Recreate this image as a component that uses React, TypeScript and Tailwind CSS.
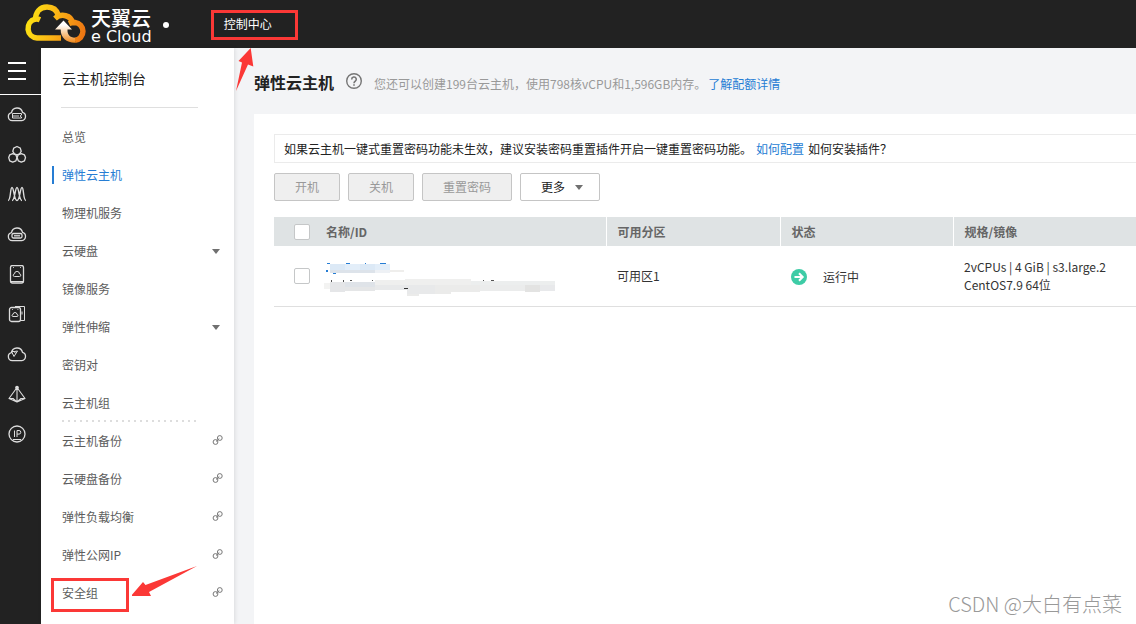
import { ReactNode } from "react";

type NavItem = {
  label: string;
  active?: boolean;
  expandable?: boolean;
  external?: boolean;
  dotted?: boolean;
  marked?: boolean;
};

const navItems: NavItem[] = [
  { label: "总览" },
  { label: "弹性云主机", active: true },
  { label: "物理机服务" },
  { label: "云硬盘", expandable: true },
  { label: "镜像服务" },
  { label: "弹性伸缩", expandable: true },
  { label: "密钥对" },
  { label: "云主机组", dotted: true },
  { label: "云主机备份", external: true },
  { label: "云硬盘备份", external: true },
  { label: "弹性负载均衡", external: true },
  { label: "弹性公网IP", external: true },
  { label: "安全组", external: true, marked: true },
];

const cloud =
  "M5.2 15.6a4 4 0 0 1-.7-7.9 5.6 5.6 0 0 1 11-.3 4.2 4.2 0 0 1-.7 8.2z";

const railIcons: { name: string; art: ReactNode }[] = [
  {
    name: "弹性云主机",
    art: (
      <>
        <path d={cloud} />
        <path d="M5.500 8.500h9v1.500l-1.500 1 1.500 1v1h-9zM6 11h6" strokeWidth="1" />
      </>
    ),
  },
  {
    name: "容器",
    art: (
      <>
        <path d="M10 1.500l3.300 1.600.9 3.200-1.600 2.600-2.600.9-2.600-.9-1.600-2.600.9-3.200z" />
        <path d="M5.700 8.700l3.200 1.200 1 2.700-1 3.200-3.200 1.400-3-1.400-1-3.200 1-2.700z" />
        <path d="M14.300 8.700l3.200 1.200 1 2.700-1 3.200-3.200 1.400-3-1.400-1.200-3.200 1-2.700z" />
      </>
    ),
  },
  {
    name: "弹性伸缩",
    art: (
      <path
        d="M1 15.500C4 15.500 3 2.500 5 2.500S7 15.500 10 15.500M5 15.500C8 15.500 8 2.500 10 2.500S12 15.500 15 15.500M10 15.500C13 15.500 13 2.500 15 2.500S16 15.500 19 15.500"
        strokeWidth="1.400"
      />
    ),
  },
  {
    name: "云硬盘",
    art: (
      <>
        <path d={cloud} />
        <rect x="5" y="8.500" width="10" height="4.500" rx="1.500" />
        <path d="M7 10.800h6" />
      </>
    ),
  },
  {
    name: "物理机",
    art: (
      <>
        <rect x="3.500" y="0.500" width="13" height="17.500" rx="2" />
        <path
          d="M7.500 11.500a1.300 1.300 0 0 1 0-2.600 2.500 2.500 0 0 1 5 0 1.300 1.300 0 0 1 0 2.600zM4 16.500h12M6 2.500h.8M13.200 2.500h.8"
          strokeWidth="1"
        />
      </>
    ),
  },
  {
    name: "镜像",
    art: (
      <>
        <rect x="2.500" y="2.500" width="11" height="14" rx="2" />
        <path
          d="M8 1.500h9.500v14H14M15 6.500v3M6 11.500a1 1 0 0 1 0-2 2 2 0 0 1 4 0 1 1 0 0 1 0 2zM5 4.500h.8M10.500 4.500h.8"
          strokeWidth="1"
        />
      </>
    ),
  },
  {
    name: "备份",
    art: (
      <>
        <path d={cloud} />
        <path d="M4.500 6.500h3l3 -.5-3.500 5.500zM7 6l1.500 2.500" strokeWidth="1" />
      </>
    ),
  },
  {
    name: "负载均衡",
    art: (
      <>
        <path d="M10 2.500L2 13.500l8 3.500 8-3.500zM10 3v14M2 13.500h4l4 3.500 4-3.500h4" strokeWidth="1.100" />
        <circle cx="10" cy="2.500" r="1.200" fill="currentColor" />
      </>
    ),
  },
  {
    name: "弹性IP",
    art: (
      <>
        <circle cx="10" cy="9" r="8" />
        <path d="M7.500 5.500v6.500M10 12V5.500h2a1.800 1.800 0 0 1 0 3.600h-2M6 14.500h8" strokeWidth="1" />
      </>
    ),
  },
];

const Logo = () => (
  <a href="#" aria-label="天翼云" className="flex items-center text-white">
    <svg width="64" height="42" viewBox="0 0 64 42" fill="none">
      <defs>
        <linearGradient id="sun" gradientUnits="userSpaceOnUse" x1="2" y1="10" x2="62" y2="26">
          <stop offset="0" stopColor="#fbe713" />
          <stop offset="0.5" stopColor="#fbb315" />
          <stop offset="1" stopColor="#ee7412" />
        </linearGradient>
        <linearGradient id="lift" x1="0" y1="0" x2="0" y2="1">
          <stop offset="0.2" stopColor="#fff" />
          <stop offset="1" stopColor="#f08a1c" />
        </linearGradient>
      </defs>
      <path
        d="M37 35H13A9.600 9.600 0 0 1 11 16.200c1.500-.3 3.500-.2 5 .5M11.500 17C11.500 9 16 4 23 4c6 0 10 3.500 11.500 8.500M31 15.500C37 10 47.500 12 48.500 20.200M45 20.500c1.500-.7 3.500-1 6-1A8.900 8.900 0 0 1 51 37.200"
        stroke="url(#sun)"
        strokeWidth="5.500"
      />
      <path
        d="M39.500 17.500l8.500 9h-4.500c-.3 5 2.500 8.200 7.500 8.200v5c-8.500 0-14.500-5-14.300-13.200H31z"
        fill="url(#lift)"
      />
    </svg>
    <span className="flex flex-col pt-1.5 pl-[3px]">
      <span className="font-['Liberation_Sans','Noto_Sans_CJK_SC',sans-serif] text-[20px] leading-5 font-medium">
        天翼云
      </span>
      <span className="font-['DejaVu_Sans',sans-serif] text-base leading-4">
        e Cloud
      </span>
    </span>
  </a>
);

const Caret = () => (
  <svg width="8" height="5" viewBox="0 0 8 5" fill="#707070">
    <path d="M0 0h8L4 5z" />
  </svg>
);

const LinkIcon = () => (
  <svg width="11" height="14" viewBox="0 0 11 14" fill="none" stroke="#777">
    <circle cx="3.500" cy="8" r="2.400" />
    <circle cx="7.800" cy="4" r="2.400" />
    <path d="M4 7.500l3.300-3" />
  </svg>
);

const Header = () => (
  <header className="flex h-12 items-center bg-[#222] pl-6">
    <Logo />
    <span className="mt-0.5 ml-[11px] size-1.5 rounded-full bg-white" />
    <a
      href="#"
      className="mt-0.5 ml-[42px] flex h-[30px] w-[87px] items-center border-3 border-[#fb3836] pb-0.5 pl-2.5 text-xs text-white"
    >
      控制中心
    </a>
  </header>
);

const Rail = () => (
  <div className="w-[41px] shrink-0 bg-[#222] text-[#ddd]">
    <button
      aria-label="菜单"
      className="flex h-[47px] w-full flex-col justify-center gap-1.5 border-b border-white pl-2"
    >
      <span className="h-0.5 w-[18px] bg-white" />
      <span className="h-0.5 w-[18px] bg-white" />
      <span className="h-0.5 w-[18px] bg-white" />
    </button>
    {railIcons.map((icon) => (
      <a
        key={icon.name}
        href="#"
        aria-label={icon.name}
        className="flex h-10 items-center pl-[7px]"
      >
        <svg
          width="20"
          height="20"
          viewBox="0 0 20 20"
          fill="none"
          stroke="currentColor"
          strokeWidth="1.300"
          strokeLinejoin="round"
        >
          {icon.art}
        </svg>
      </a>
    ))}
  </div>
);

const Sidebar = () => (
  <nav className="z-10 w-[193px] shrink-0 bg-white shadow-[1px_0_4px_rgba(0,0,0,0.1)]">
    <div className="mr-9 ml-5 flex h-[60px] items-center border-b border-[#dfdfdf] pl-px text-sm">
      <h2>云主机控制台</h2>
    </div>
    <ul className="pt-2.5 pl-[11px] text-xs text-[#5c5c5c]">
      {navItems.map((item) => (
        <li key={item.label} className="relative flex h-[38px] items-center pr-[11px]">
          <a
            href="#"
            className={
              item.active
                ? "flex h-[18px] flex-1 items-center border-l-2 border-[#267dd4] pl-2 text-[#267dd4]"
                : "flex h-[18px] flex-1 items-center border-l-2 border-transparent pl-2"
            }
          >
            {item.label}
          </a>
          {item.expandable && (
            <span className="pr-[3px]">
              <Caret />
            </span>
          )}
          {item.external && <LinkIcon />}
          {item.dotted && (
            <span className="absolute bottom-0 left-2.5 h-0.5 w-[136px] bg-[repeating-linear-gradient(90deg,#ddd_0_2px,transparent_2px_6px)]" />
          )}
          {item.marked && (
            <>
              <span className="absolute top-1 -left-px h-[34px] w-[78px] border-3 border-[#fb3836]" />
              <svg
                className="absolute -top-2 left-20"
                width="66"
                height="32"
                viewBox="0 0 66 32"
                fill="#fb3836"
              >
                <path d="M-1 30L11 16l2.500 3L65 0 17 26l2 4z" />
              </svg>
            </>
          )}
        </li>
      ))}
    </ul>
  </nav>
);

// Pixelated cover over the instance name and id
const MaskedName = () => (
  <svg width="232" height="36" viewBox="0 0 232 36" role="img" aria-label="已隐藏" shapeRendering="crispEdges">
    <path fill="#267dd4" d="M3 1h3v1H3zM22 1h4v1h-4zM41 1h1v1h-1zM56 1h6v1h-6zM2 8h2v2H2zM9 11h3v1H9zM10 10h2v1h-2z" />
    <path fill="#dce9f6" d="M6 2h15v6H6zM36 2h15v6H36z" />
    <path fill="#e3eef9" d="M21 2h15v6H21zM51 2h15v6H51z" />
    <path fill="#dde3ea" d="M6 8h45v3H6z" />
    <path fill="#eef1f5" d="M51 8h15v3H51z" />
    <path fill="#efeeec" d="M66 8h14v2H66z" />
    <path fill="#555" d="M7 18h1v2H7zM19 18h1v2h-1zM26 18h2v1h-2zM48 18h1v1h-1zM159 18h1v1h-1zM167 18h3v1h-3zM225 19h2v1h-2z" />
    <path fill="#f3f3f2" d="M0 21h6v6H0z" />
    <path fill="#e5e6e8" d="M6 20h15v10H6z" />
    <path fill="#dfe3e8" d="M21 20h30v5H21z" />
    <path fill="#e5e6e7" d="M21 25h30v4H21z" />
    <path fill="#efefee" d="M51 18h30v5H51zM81 17h66v6H81z" />
    <path fill="#e8e9ea" d="M51 23h60v5H51zM83 28h28v4H83z" />
    <path fill="#ebebea" d="M111 23h45v7h-45zM111 30h16v2h-16zM83 32h12v2H83z" />
    <path fill="#eceeee" d="M147 19h84v4h-84z" />
    <path fill="#ebecec" d="M156 23h45v6h-45z" />
    <path fill="#e3e3e2" d="M201 23h15v7h-15z" />
    <path fill="#e8e9eb" d="M216 23h15v6h-15z" />
    <path fill="#333" d="M80 26h4v1h-4z" />
  </svg>
);

const ServerTable = () => (
  <table className="mt-4 w-full table-fixed border-collapse text-left text-xs">
    <thead>
      <tr className="h-[29px] bg-[#dfe3e4] text-[#666]">
        <th className="w-[50px] pl-5">
          <input
            type="checkbox"
            aria-label="全选"
            className="block size-4 appearance-none rounded-xs border border-[#c5c7c8] bg-white"
          />
        </th>
        <th className="w-[282px] border-r border-white pl-0.5">名称/ID</th>
        <th className="w-[174px] border-r border-white pl-[11px]">可用分区</th>
        <th className="w-[173px] border-r border-white pl-[11px]">状态</th>
        <th className="pl-[11px]">规格/镜像</th>
      </tr>
    </thead>
    <tbody>
      <tr className="h-[60px] border-b border-[#dfdfdf] text-[#333]">
        <td className="pl-5">
          <input
            type="checkbox"
            aria-label="选择云主机"
            className="block size-4 appearance-none rounded-xs border border-[#c5c7c8] bg-white"
          />
        </td>
        <td className="pt-2">
          <MaskedName />
        </td>
        <td className="pl-[11px]">可用区1</td>
        <td className="pt-0.5 pl-[11px]">
          <span className="flex items-center gap-4">
            <svg width="16" height="16" viewBox="0 0 16 16" fill="none">
              <circle cx="8" cy="8" r="8" fill="#3dcca6" />
              <path d="M3.500 8h8M8 4.300L11.700 8 8 11.700" stroke="#fff" strokeWidth="2" />
            </svg>
            运行中
          </span>
        </td>
        <td className="pl-[11px] leading-[18px]">
          2vCPUs | 4 GiB | s3.large.2
          <br />
          CentOS7.9 64位
        </td>
      </tr>
    </tbody>
  </table>
);

const Main = () => (
  <main className="flex min-w-0 flex-1 flex-col bg-[#f3f4f6] pl-5">
    <div className="flex h-[66px] items-center pt-1">
      <h1 className="pb-0.5 text-base font-bold text-[#222]">弹性云主机</h1>
      <button aria-label="帮助" className="ml-3">
        <svg width="16" height="20" viewBox="0 0 16 20" fill="none" stroke="#757575" strokeWidth="1.400">
          <circle cx="8" cy="8" r="7.300" />
          <path d="M5.700 6.400a2.300 2.300 0 1 1 3.500 1.900c-.8.500-1.200.8-1.200 1.900M8 11.200v1.600" strokeWidth="1.600" />
        </svg>
      </button>
      <p className="ml-3 pt-0.5 text-xs text-[#999]">
        您还可以创建199台云主机，使用798核vCPU和1,596GB内存。
        <a href="#" className="ml-0.5 text-[#267dd4]">
          了解配额详情
        </a>
      </p>
    </div>
    <section className="flex-1 bg-white pt-5 pl-5">
      <p className="flex h-[29px] items-center gap-1 border-y border-l border-[#ebebeb] pl-[9px] text-xs text-[#222]">
        <span>如果云主机一键式重置密码功能未生效，建议安装密码重置插件开启一键重置密码功能。</span>
        <a href="#" className="text-[#267dd4]">
          如何配置
        </a>
        <a href="#">如何安装插件？</a>
      </p>
      <div className="mt-2.5 flex gap-2 text-xs">
        <button disabled className="h-7 w-[66px] rounded-xs border border-[#c5c5c5] bg-[#efefef] text-[#999]">
          开机
        </button>
        <button disabled className="h-7 w-[66px] rounded-xs border border-[#c5c5c5] bg-[#efefef] text-[#999]">
          关机
        </button>
        <button disabled className="h-7 w-[90px] rounded-xs border border-[#c5c5c5] bg-[#efefef] text-[#999]">
          重置密码
        </button>
        <button className="flex h-7 w-20 items-center gap-2.5 rounded-xs border border-[#c5c5c5] bg-white pl-5 text-[#222]">
          更多
          <Caret />
        </button>
      </div>
      <ServerTable />
    </section>
  </main>
);

export default function App() {
  return (
    <div className="relative flex min-h-screen flex-col font-['Noto_Sans_CJK_SC',sans-serif] text-[#222]">
      <Header />
      <div className="flex flex-1">
        <Rail />
        <Sidebar />
        <Main />
      </div>
      <svg
        className="absolute top-12 left-[235px] z-20"
        width="20"
        height="44"
        viewBox="0 0 20 44"
        fill="#fb3836"
      >
        <path d="M15.700 0L18.300 18.500 13 16.500 1 43 7 14.500 3.500 13z" />
      </svg>
      <span className="absolute right-3.5 bottom-1.5 z-20 text-[20px] leading-7 font-light text-[#999]">
        CSDN @大白有点菜
      </span>
    </div>
  );
}
